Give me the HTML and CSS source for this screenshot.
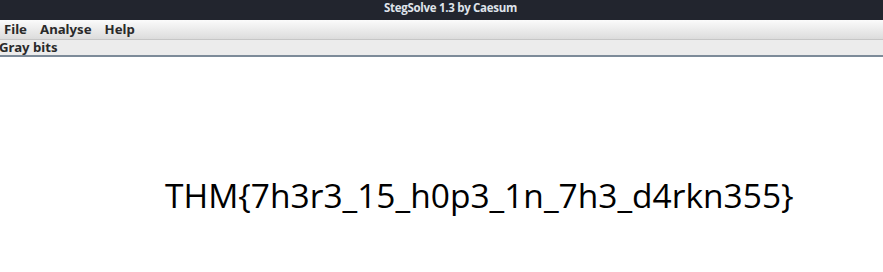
FILE: index.html
```html
<!DOCTYPE html>
<html>
<head>
  <title>StegSolve 1.3 by Caesum</title>
  <link rel="stylesheet" href="styles.css">
</head>
<body>
  <div class="titlebar">StegSolve 1.3 by Caesum</div>
  <nav class="menubar">
    <span class="menu-item">File</span>
    <span class="menu-item">Analyse</span>
    <span class="menu-item">Help</span>
  </nav>
  <div class="mode-label">Gray bits</div>
  <main class="canvas">
    <div class="flag">THM{7h3r3_15_h0p3_1n_7h3_d4rkn355}</div>
  </main>
</body>
</html>
```

FILE: styles.css
```css
* {
  margin: 0;
  padding: 0;
  box-sizing: border-box;
}

body {
  width: 883px;
  height: 272px;
  overflow: hidden;
  background: #ffffff;
  font-family: 'Noto Sans', sans-serif;
}

.titlebar {
  height: 20px;
  padding-left: 18px;
  background: #22252e;
  color: #dfe3ea;
  font-family: 'Open Sans', sans-serif;
  font-weight: 700;
  font-size: 11.5px;
  letter-spacing: -0.3px;
  line-height: 16px;
  text-align: center;
}

.menubar {
  height: 20px;
  display: flex;
  gap: 13px;
  padding-left: 4px;
  background: linear-gradient(#fbfbfb, #dcdcdc);
  border-bottom: 1px solid #c6c6c6;
}

.menu-item {
  font-weight: 700;
  font-size: 13.2px;
  line-height: 19px;
  color: #2a2a2a;
}

.mode-label {
  height: 17px;
  background: #ececec;
  border-bottom: 2px solid #7d8b99;
  font-weight: 700;
  font-size: 13.2px;
  line-height: 14px;
  color: #2a2a2a;
  text-indent: -1px;
}

.canvas {
  height: 215px;
  padding: 118px 0 0 165px;
}

.flag {
  font-family: 'Open Sans', sans-serif;
  font-size: 33.5px;
  line-height: 40px;
  color: #000000;
  white-space: nowrap;
}
```
